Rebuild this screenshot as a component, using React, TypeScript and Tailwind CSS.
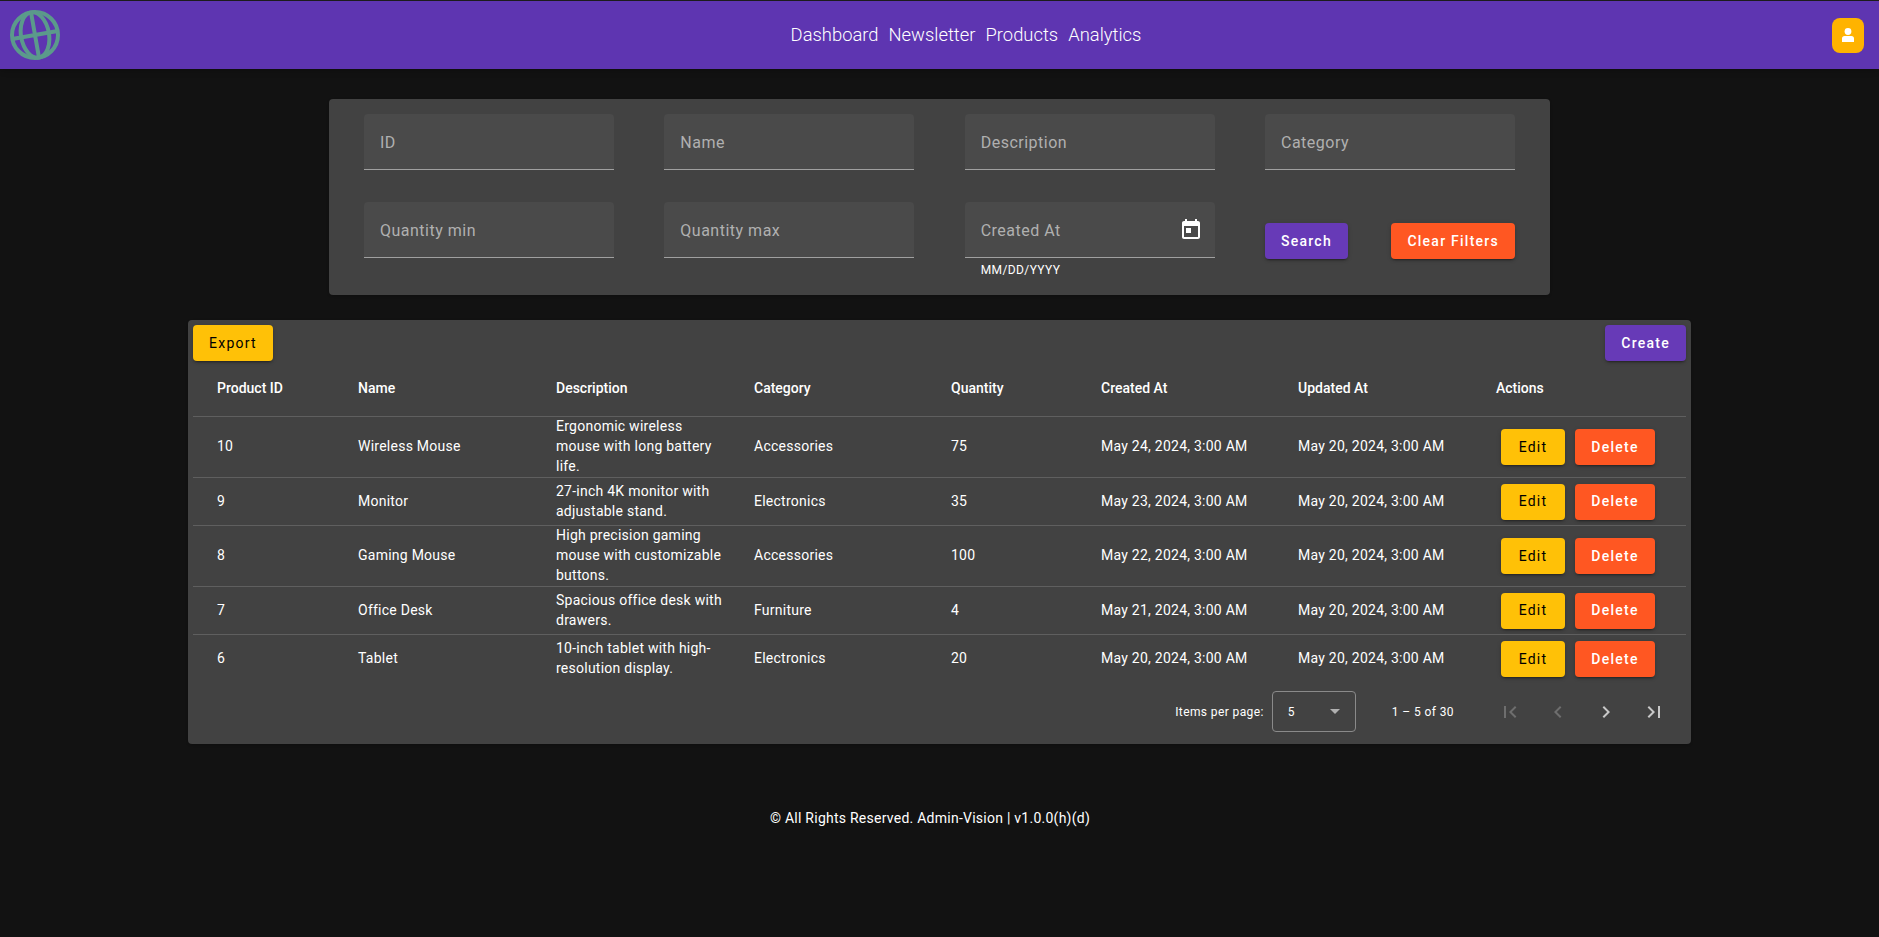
const rows = [
  {
    id: 10,
    name: "Wireless Mouse",
    desc: "Ergonomic wireless mouse with long battery life.",
    category: "Accessories",
    qty: 75,
    created: "May 24, 2024, 3:00 AM",
    height: "h-[61px]",
  },
  {
    id: 9,
    name: "Monitor",
    desc: "27-inch 4K monitor with adjustable stand.",
    category: "Electronics",
    qty: 35,
    created: "May 23, 2024, 3:00 AM",
    height: "h-12",
  },
  {
    id: 8,
    name: "Gaming Mouse",
    desc: "High precision gaming mouse with customizable buttons.",
    category: "Accessories",
    qty: 100,
    created: "May 22, 2024, 3:00 AM",
    height: "h-[61px]",
  },
  {
    id: 7,
    name: "Office Desk",
    desc: "Spacious office desk with drawers.",
    category: "Furniture",
    qty: 4,
    created: "May 21, 2024, 3:00 AM",
    height: "h-12",
  },
  {
    id: 6,
    name: "Tablet",
    desc: "10-inch tablet with high-resolution display.",
    category: "Electronics",
    qty: 20,
    created: "May 20, 2024, 3:00 AM",
    height: "h-12",
  },
];

const headers = [
  { label: "Product ID", width: "w-[165px]", pad: "pl-6" },
  { label: "Name", width: "w-[198px]", pad: "" },
  { label: "Description", width: "w-[198px]", pad: "" },
  { label: "Category", width: "w-[197px]", pad: "" },
  { label: "Quantity", width: "w-[150px]", pad: "" },
  { label: "Created At", width: "w-[197px]", pad: "" },
  { label: "Updated At", width: "w-[198px]", pad: "" },
  { label: "Actions", width: "w-[190px]", pad: "" },
];

const Btn = ({ className, children }: { className: string; children: string }) => (
  <button
    className={`h-9 rounded px-4 pb-px text-sm font-medium tracking-[1.25px] shadow-[0_3px_1px_-2px_rgba(0,0,0,.2),0_2px_2px_0_rgba(0,0,0,.14),0_1px_5px_0_rgba(0,0,0,.12)] ${className}`}
  >
    {children}
  </button>
);

const Field = ({ label, icon, hint }: { label: string; icon?: boolean; hint?: string }) => (
  <div className="relative">
    <div className="flex h-14 items-center justify-between rounded-t border-b border-[#a0a0a0] bg-[#4a4a4a] pl-4 pr-3">
      <span className="pt-[2px] text-base tracking-[.5px] text-[#b0b0b0]">{label}</span>
      {icon && (
        <svg viewBox="0 0 24 24" className="h-6 w-6 fill-white">
          <path d="M19 3h-1V1h-2v2H8V1H6v2H5c-1.11 0-1.99.9-1.99 2L3 19c0 1.1.89 2 2 2h14c1.1 0 2-.9 2-2V5c0-1.1-.9-2-2-2zm0 16H5V8h14v11zM7 10h5v5H7z" />
        </svg>
      )}
    </div>
    {hint && <div className="absolute left-4 top-[60px] text-xs tracking-[.4px] text-white">{hint}</div>}
  </div>
);

const PageIcon = ({ d, dim }: { d: string; dim?: boolean }) => (
  <div className="flex h-10 w-12 items-center justify-center">
    <svg viewBox="0 0 24 24" className={`h-6 w-6 ${dim ? "fill-[#6e6e6e]" : "fill-[#c8c8c8]"}`}>
      <path d={d} />
    </svg>
  </div>
);

const Globe = () => (
  <svg viewBox="0 0 50 50" className="h-[50px] w-[50px] fill-none stroke-[#5b9a8b]" strokeWidth="4">
    <circle cx="25" cy="25" r="23" />
    <g transform="rotate(-10 25 25)">
      <ellipse cx="25" cy="25" rx="14" ry="23" />
      <path d="M25 2v46M2 25h46" />
    </g>
  </svg>
);

export default function App() {
  return (
    <div className="min-h-[937px] bg-[#121212] font-['Roboto',sans-serif] text-white">
      <header className="flex h-[69px] items-center justify-between border-t border-[#1c1c1c] bg-[#5e35b1] pl-[10px] pr-[15px] shadow-md">
        <Globe />
        <nav className="ml-[40px] flex gap-[10px] text-[18.4px] font-light">
          <span>Dashboard</span>
          <span>Newsletter</span>
          <span>Products</span>
          <span>Analytics</span>
        </nav>
        <div className="flex h-[35px] w-8 items-center justify-center rounded-lg bg-[#ffb300]">
          <svg viewBox="0 0 12 14" className="h-[14px] w-3 fill-white">
            <circle cx="6" cy="3.5" r="3.4" />
            <path d="M2.6 8h6.8A2.6 2.6 0 0 1 12 10.6V14H0v-3.4A2.6 2.6 0 0 1 2.6 8z" />
          </svg>
        </div>
      </header>

      <section className="mx-auto mt-[30px] grid h-[196px] w-[1221px] grid-cols-[250px_250px_250px_250px] content-start justify-between gap-y-8 rounded bg-[#424242] px-[35px] pt-[15px] shadow">
        <Field label="ID" />
        <Field label="Name" />
        <Field label="Description" />
        <Field label="Category" />
        <Field label="Quantity min" />
        <Field label="Quantity max" />
        <Field label="Created At" icon hint="MM/DD/YYYY" />
        <div className="flex items-start justify-between pt-[21px]">
          <Btn className="bg-[#673ab7] text-white">Search</Btn>
          <Btn className="bg-[#ff5722] text-white">Clear Filters</Btn>
        </div>
      </section>

      <section className="mx-auto mt-[25px] h-[424px] w-[1503px] rounded bg-[#424242] px-[5px] pt-[5px] shadow">
        <div className="flex justify-between">
          <Btn className="bg-[#ffc107] font-normal text-black">Export</Btn>
          <Btn className="bg-[#673ab7] text-white">Create</Btn>
        </div>
        <table className="w-full table-fixed border-separate border-spacing-0 text-left text-sm tracking-[.25px]">
          <thead>
            <tr className="h-14">
              {headers.map((h) => (
                <th
                  key={h.label}
                  className={`${h.width} ${h.pad} border-b border-[#5f5f5f] pb-[2px] font-medium tracking-normal`}
                >
                  {h.label}
                </th>
              ))}
            </tr>
          </thead>
          <tbody>
            {rows.map((r, i) => {
              const line = i < rows.length - 1 ? "border-b border-[#5f5f5f]" : "";
              return (
                <tr key={r.id} className={r.height}>
                  <td className={`pb-[2px] pl-6 ${line}`}>{r.id}</td>
                  <td className={`pb-[2px] ${line}`}>{r.name}</td>
                  <td className={`pr-[30px] leading-5 ${line}`}>
                    <div className="-mt-[2px]">{r.desc}</div>
                  </td>
                  <td className={`pb-[2px] ${line}`}>{r.category}</td>
                  <td className={`pb-[2px] ${line}`}>{r.qty}</td>
                  <td className={`pb-[2px] ${line}`}>{r.created}</td>
                  <td className={`pb-[2px] ${line}`}>May 20, 2024, 3:00 AM</td>
                  <td className={line}>
                    <div className="flex gap-[10px] pl-[5px]">
                      <Btn className="w-16 bg-[#ffc107] font-normal text-black">Edit</Btn>
                      <Btn className="w-20 bg-[#ff5722] text-white">Delete</Btn>
                    </div>
                  </td>
                </tr>
              );
            })}
          </tbody>
        </table>
        <div className="mt-2 flex items-center justify-end pr-[8px] text-xs tracking-[.4px]">
          <span className="mr-2">Items per page:</span>
          <div className="flex h-[41px] w-[84px] items-center justify-between rounded border border-[#8a8a8a] px-[15px]">
            <span>5</span>
            <div className="h-0 w-0 border-x-[5px] border-t-[5px] border-x-transparent border-t-[#b0b0b0]" />
          </div>
          <span className="ml-9 mr-8">1 – 5 of 30</span>
          <PageIcon dim d="M18.41 16.59L13.82 12l4.59-4.59L17 6l-6 6 6 6zM6 6h2v12H6z" />
          <PageIcon dim d="M15.41 7.41L14 6l-6 6 6 6 1.41-1.41L10.83 12z" />
          <PageIcon d="M10 6L8.59 7.41 13.17 12l-4.58 4.59L10 18l6-6z" />
          <PageIcon d="M5.59 7.41L10.18 12l-4.59 4.59L7 18l6-6-6-6zM16 6h2v12h-2z" />
        </div>
      </section>

      <footer className="mt-16 pr-[19px] text-center text-sm tracking-[.25px]">
        © All Rights Reserved. Admin-Vision | v1.0.0(h)(d)
      </footer>
    </div>
  );
}
